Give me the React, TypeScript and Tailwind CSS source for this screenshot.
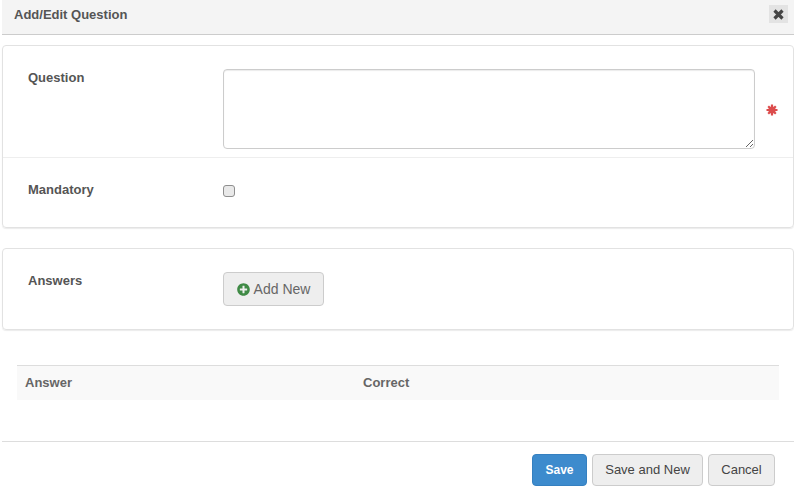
import { FaPlusCircle } from 'react-icons/fa';

export default function App() {
  return (
    <div className="w-[794px] h-[497px] overflow-hidden bg-white font-['Liberation_Sans',Arial,sans-serif] text-[13px] text-[#444]">
      <div className="ml-[2px] h-[35px] bg-[#f4f4f4] border-b border-[#ccc] flex items-start justify-between pt-[5px] pl-[12px] pr-[6px]">
        <span className="font-bold text-[#555]">Add/Edit Question</span>
        <button className="w-[19px] h-[18px] bg-[#e3e3e3] flex items-center justify-center text-[#444]">
          <svg width="11" height="11" viewBox="0 0 11 11">
            <path d="M1.5 1.5 L9.5 9.5 M9.5 1.5 L1.5 9.5" stroke="currentColor" strokeWidth="3.2" />
          </svg>
        </button>
      </div>

      <div className="mt-[10px] ml-[2px] h-[183px] border border-[#e2e2e2] rounded-[4px] shadow-[0_1px_1px_rgba(0,0,0,0.08)]">
        <div className="h-[112px] border-b border-[#eee] flex pl-[25px] pt-[23px]">
          <label className="w-[195px] -mt-[1px] font-bold text-[#555]">Question</label>
          <textarea className="w-[532px] h-[80px] border border-[#ccc] rounded-[4px] shadow-[inset_0_1px_1px_rgba(0,0,0,0.08)] bg-white" />
          <svg width="12" height="12" viewBox="0 0 12 12" className="ml-[11px] mt-[35px] text-[#dc4c4c]">
            <circle cx="6" cy="6" r="3.6" fill="currentColor" />
            <path d="M6 0.5 V11.5 M0.5 6 H11.5 M2.2 2.2 L9.8 9.8 M9.8 2.2 L2.2 9.8" stroke="currentColor" strokeWidth="2.2" />
          </svg>
        </div>
        <div className="flex pl-[25px] pt-[22px]">
          <label className="w-[195px] font-bold text-[#555]">Mandatory</label>
          <input type="checkbox" className="appearance-none w-[12px] h-[12px] mt-[5px] bg-[#e9e9e9] border border-[#8f8f8f] rounded-[3px]" />
        </div>
      </div>

      <div className="mt-[20px] ml-[2px] h-[82px] border border-[#e2e2e2] rounded-[4px] shadow-[0_1px_1px_rgba(0,0,0,0.08)] flex pl-[25px] pt-[23px]">
        <label className="w-[195px] -mt-[1px] font-bold text-[#555]">Answers</label>
        <button className="w-[101px] h-[34px] bg-[#eee] border border-[#ccc] rounded-[4px] flex items-center justify-center gap-[4px] text-[14px] text-[#666]">
          <FaPlusCircle size={13} className="text-[#3f8a45]" />
          Add New
        </button>
      </div>

      <div className="mt-[35px] ml-[17px] w-[762px] h-[35px] bg-[#f9f9f9] border-t border-[#ddd] flex items-center pl-[8px] font-bold text-[#666]">
        <span className="w-[338px]">Answer</span>
        <span>Correct</span>
      </div>

      <div className="mt-[41px] ml-[2px] border-t border-[#ddd] flex justify-end gap-[5px] pt-[12px] pr-[19px]">
        <button className="w-[55px] h-[32px] bg-[#3d8bcd] border border-[#3580c0] rounded-[4px] text-white font-bold text-[12px]">Save</button>
        <button className="w-[111px] h-[32px] bg-[#eee] border border-[#ccc] rounded-[4px] text-[#444]">Save and New</button>
        <button className="w-[67px] h-[32px] bg-[#eee] border border-[#ccc] rounded-[4px] text-[#444]">Cancel</button>
      </div>
    </div>
  );
}
